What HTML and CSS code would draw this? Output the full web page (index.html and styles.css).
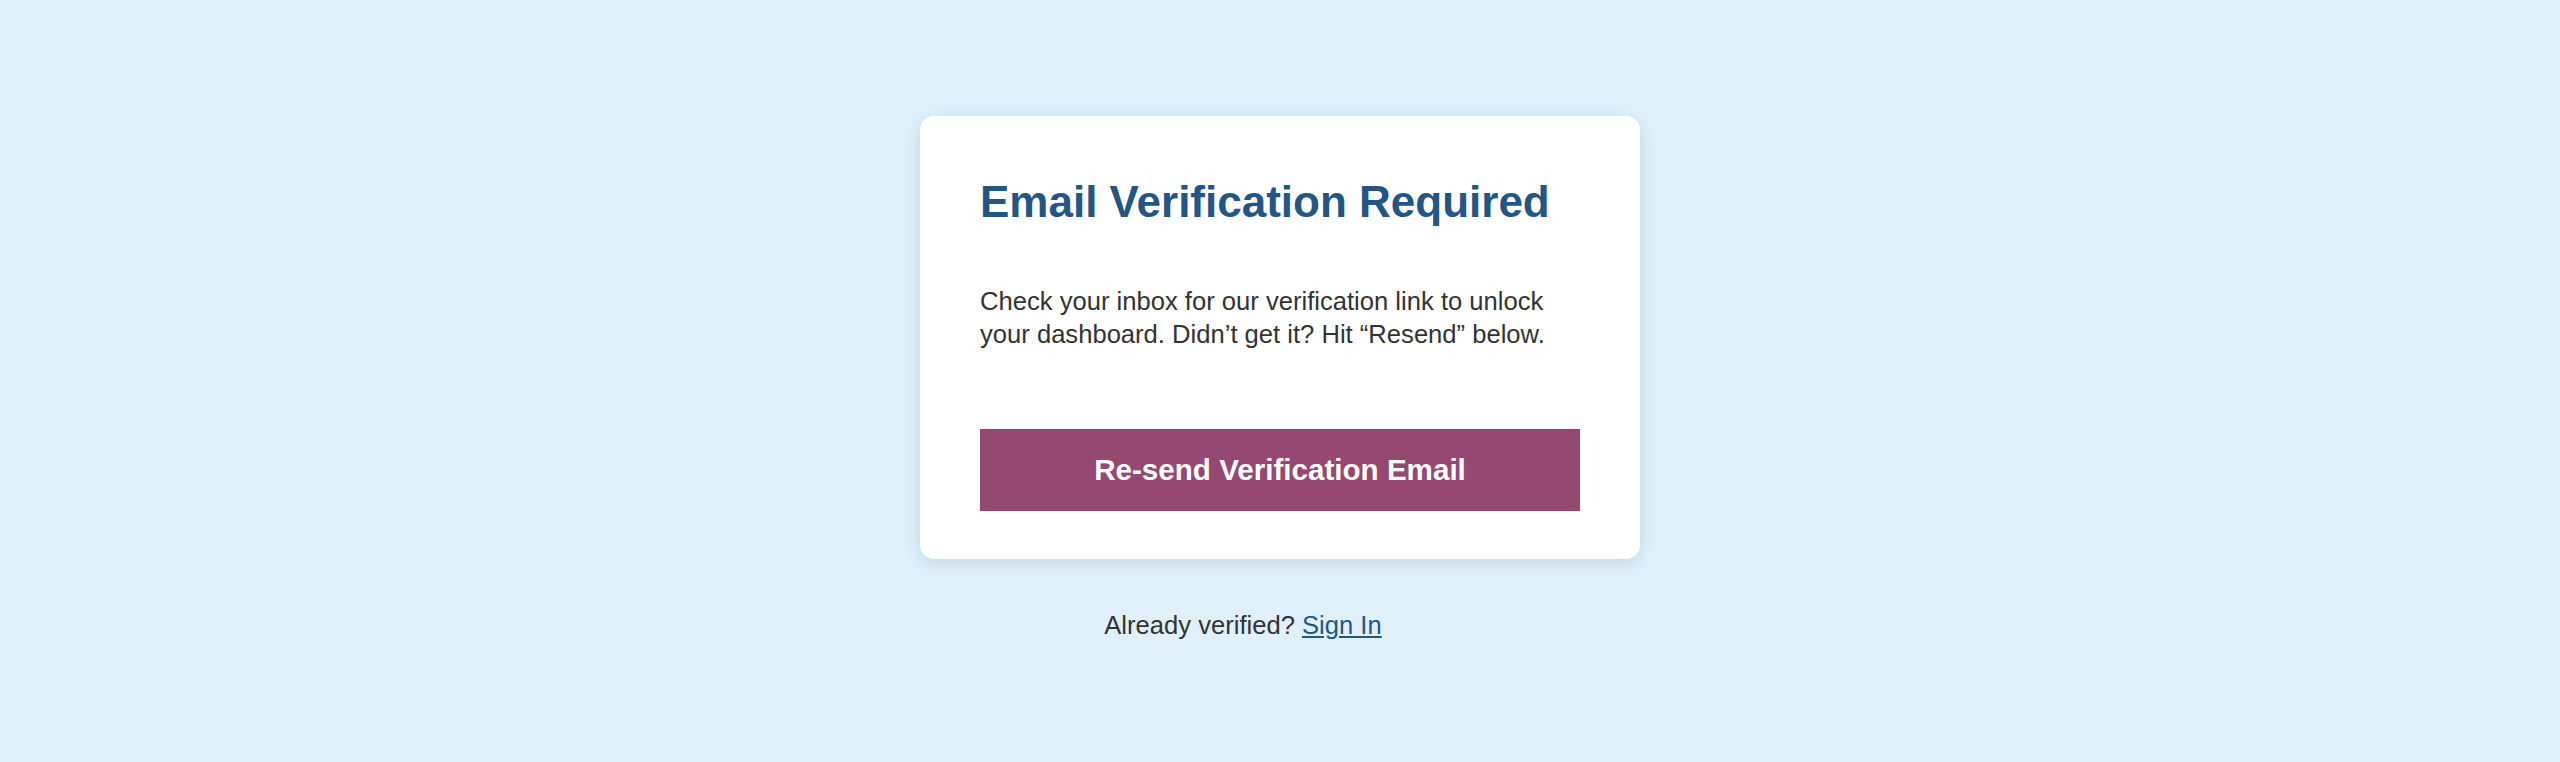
FILE: index.html
```html
<!DOCTYPE html>
<html lang="en">
<head>
<meta charset="utf-8">
<title>Email Verification Required</title>
<link rel="stylesheet" href="styles.css">
</head>
<body>
<main class="page">
  <section class="card">
    <h1 class="title">Email Verification Required</h1>
    <p class="message">Check your inbox for our verification link to unlock your dashboard. Didn’t get it? Hit “Resend” below.</p>
    <button class="resend" type="button">Re-send Verification Email</button>
  </section>
  <p class="footer">Already verified? <a class="link" href="#">Sign In</a></p>
</main>
</body>
</html>
```

FILE: styles.css
```css
html, body {
  margin: 0;
  padding: 0;
}
body {
  background: #dff0fb;
  font-family: "Liberation Sans", Arial, Helvetica, sans-serif;
  color: #333333;
  height: 762px;
}
.page {
  display: flex;
  flex-direction: column;
  align-items: center;
  padding-top: 116px;
}
.card {
  box-sizing: border-box;
  width: 720px;
  background: #ffffff;
  border-radius: 14px;
  box-shadow: 0 4px 16px rgba(60, 100, 140, 0.18);
  padding: 61px 60px 48px;
  display: flex;
  flex-direction: column;
}
.title {
  margin: 0;
  font-size: 44px;
  line-height: 50px;
  font-weight: 700;
  color: #235685;
}
.message {
  margin: 58px 0 0;
  font-size: 25.6px;
  line-height: 33px;
  color: #333333;
}
.resend {
  margin-top: 78px;
  height: 82px;
  border: none;
  border-radius: 0;
  background: #944872;
  color: #ffffff;
  font-family: inherit;
  font-size: 29.6px;
  font-weight: 700;
  padding: 0;
}
.footer {
  margin: 50px 0 0;
  padding-right: 74px;
  font-size: 25.6px;
  line-height: 33px;
  color: #333333;
}
.link {
  color: #23578a;
  text-decoration: underline;
}
```
